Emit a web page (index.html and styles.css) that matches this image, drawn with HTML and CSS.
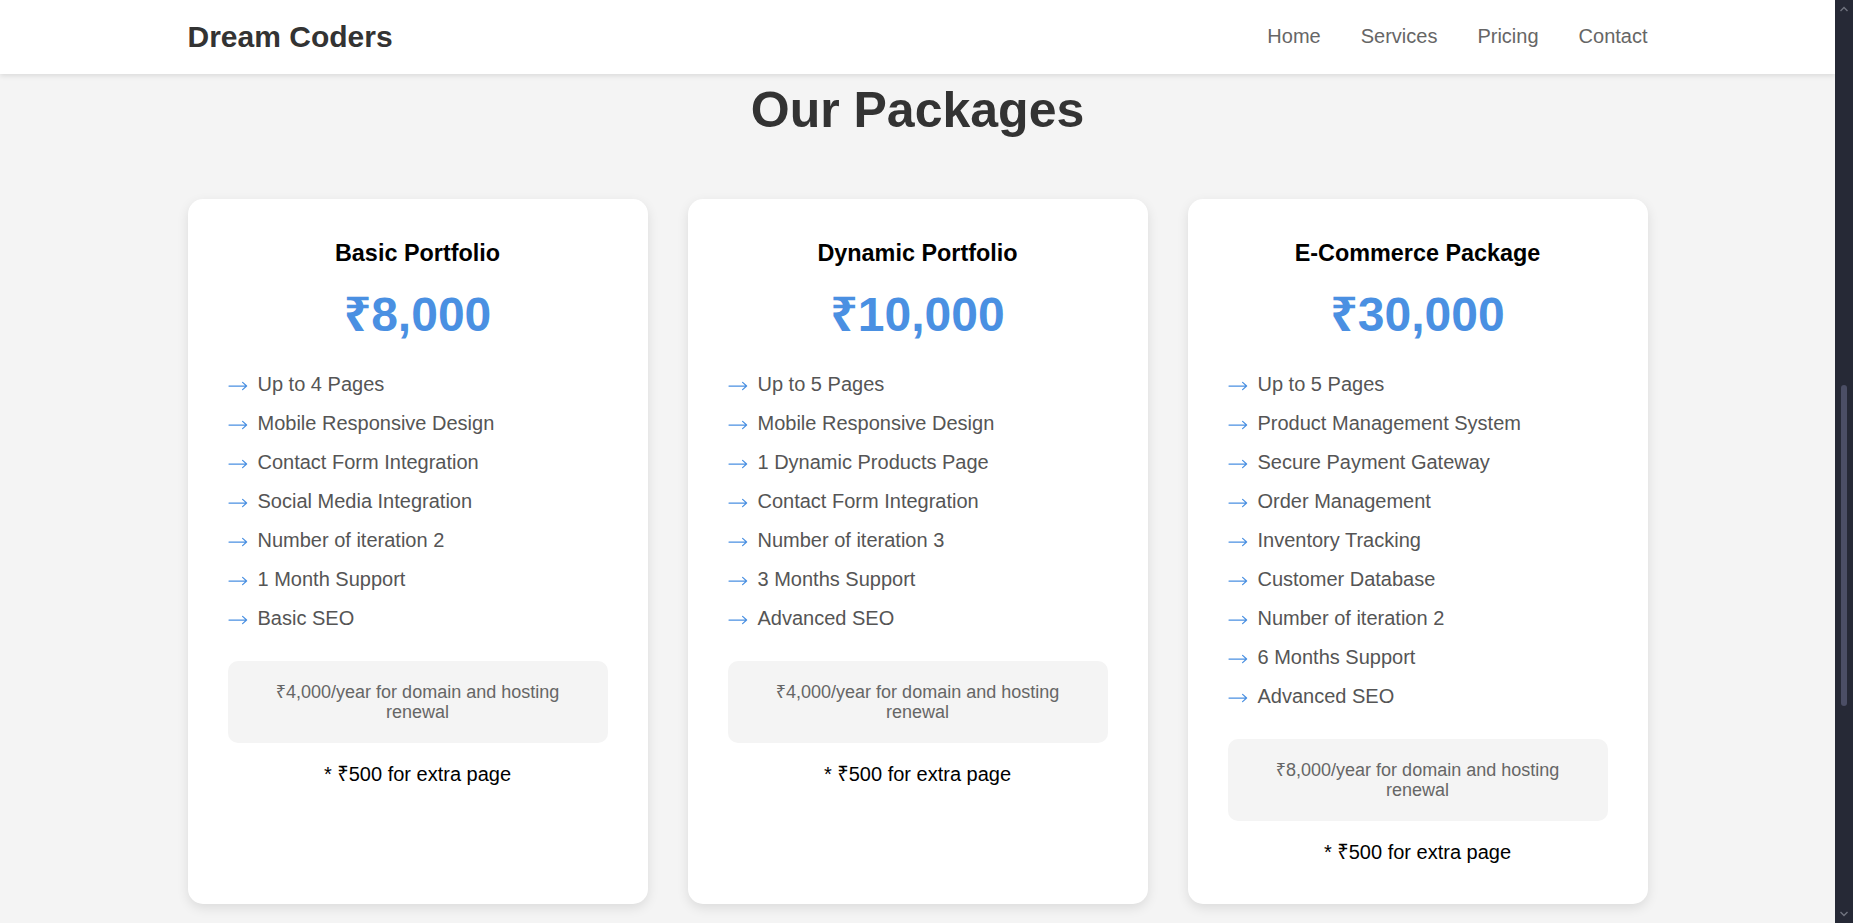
FILE: index.html
```html
<!DOCTYPE html>
<html lang="en">
<head>
<meta charset="UTF-8">
<title>Dream Coders</title>
<link rel="stylesheet" href="styles.css">
</head>
<body>
<svg class="defs" aria-hidden="true">
  <symbol id="arrow" viewBox="0 0 20 10">
    <path d="M1 5H18.6M14.6 1.4L18.6 5L14.6 8.6" fill="none" stroke="#4a90e2" stroke-width="1.25" stroke-linecap="round" stroke-linejoin="round"/>
  </symbol>
</svg>

<header class="site-header">
  <div class="container header-inner">
    <div class="logo">Dream Coders</div>
    <nav class="nav">
      <a href="#home">Home</a>
      <a href="#services">Services</a>
      <a href="#pricing">Pricing</a>
      <a href="#contact">Contact</a>
    </nav>
  </div>
</header>

<main>
  <section class="pricing" id="pricing">
    <div class="container">
      <h2 class="section-title">Our Packages</h2>
      <div class="cards">
        <div class="card">
          <h3 class="card-title">Basic Portfolio</h3>
          <div class="price">₹8,000</div>
          <ul class="features">
            <li><svg class="arrow"><use href="#arrow"/></svg>Up to 4 Pages</li>
            <li><svg class="arrow"><use href="#arrow"/></svg>Mobile Responsive Design</li>
            <li><svg class="arrow"><use href="#arrow"/></svg>Contact Form Integration</li>
            <li><svg class="arrow"><use href="#arrow"/></svg>Social Media Integration</li>
            <li><svg class="arrow"><use href="#arrow"/></svg>Number of iteration 2</li>
            <li><svg class="arrow"><use href="#arrow"/></svg>1 Month Support</li>
            <li><svg class="arrow"><use href="#arrow"/></svg>Basic SEO</li>
          </ul>
          <div class="note">₹4,000/year for domain and hosting renewal</div>
          <p class="extra">* ₹500 for extra page</p>
        </div>
        <div class="card">
          <h3 class="card-title">Dynamic Portfolio</h3>
          <div class="price">₹10,000</div>
          <ul class="features">
            <li><svg class="arrow"><use href="#arrow"/></svg>Up to 5 Pages</li>
            <li><svg class="arrow"><use href="#arrow"/></svg>Mobile Responsive Design</li>
            <li><svg class="arrow"><use href="#arrow"/></svg>1 Dynamic Products Page</li>
            <li><svg class="arrow"><use href="#arrow"/></svg>Contact Form Integration</li>
            <li><svg class="arrow"><use href="#arrow"/></svg>Number of iteration 3</li>
            <li><svg class="arrow"><use href="#arrow"/></svg>3 Months Support</li>
            <li><svg class="arrow"><use href="#arrow"/></svg>Advanced SEO</li>
          </ul>
          <div class="note">₹4,000/year for domain and hosting renewal</div>
          <p class="extra">* ₹500 for extra page</p>
        </div>
        <div class="card">
          <h3 class="card-title">E-Commerce Package</h3>
          <div class="price">₹30,000</div>
          <ul class="features">
            <li><svg class="arrow"><use href="#arrow"/></svg>Up to 5 Pages</li>
            <li><svg class="arrow"><use href="#arrow"/></svg>Product Management System</li>
            <li><svg class="arrow"><use href="#arrow"/></svg>Secure Payment Gateway</li>
            <li><svg class="arrow"><use href="#arrow"/></svg>Order Management</li>
            <li><svg class="arrow"><use href="#arrow"/></svg>Inventory Tracking</li>
            <li><svg class="arrow"><use href="#arrow"/></svg>Customer Database</li>
            <li><svg class="arrow"><use href="#arrow"/></svg>Number of iteration 2</li>
            <li><svg class="arrow"><use href="#arrow"/></svg>6 Months Support</li>
            <li><svg class="arrow"><use href="#arrow"/></svg>Advanced SEO</li>
          </ul>
          <div class="note">₹8,000/year for domain and hosting renewal</div>
          <p class="extra">* ₹500 for extra page</p>
        </div>
      </div>
    </div>
  </section>
</main>

<div class="scroll-rail" aria-hidden="true">
  <svg class="rail-btn rail-up" viewBox="0 0 10 6"><path d="M1.5 5L5 1.5L8.5 5" fill="none" stroke="#70737f" stroke-width="1.4"/></svg>
  <div class="rail-thumb"></div>
  <svg class="rail-btn rail-down" viewBox="0 0 10 6"><path d="M1.5 1L5 4.5L8.5 1" fill="none" stroke="#70737f" stroke-width="1.4"/></svg>
</div>
</body>
</html>
```

FILE: styles.css
```css
* {
  box-sizing: border-box;
}

body {
  margin: 0 18px 0 0;
  background: #f4f4f4;
  font-family: "Liberation Sans", Arial, "Noto Sans", "DejaVu Sans", sans-serif;
  line-height: 1.15;
  color: #333;
}

.defs {
  position: absolute;
  width: 0;
  height: 0;
  overflow: hidden;
}

.container {
  max-width: 1500px;
  margin: 0 auto;
  padding: 0 20px;
}

.site-header {
  position: relative;
  z-index: 2;
  background: #fff;
  box-shadow: 0 2px 5px rgba(0, 0, 0, 0.1);
}

.header-inner {
  display: flex;
  justify-content: space-between;
  align-items: center;
  padding-top: 19.5px;
  padding-bottom: 19.5px;
}

.logo {
  font-size: 30px;
  font-weight: bold;
  color: #333;
}

.nav {
  display: flex;
  gap: 40px;
}

.nav a {
  font-size: 20px;
  color: #666;
  text-decoration: none;
}

.pricing {
  padding: 8px 0 14px;
}

.section-title {
  margin: 0 0 60px;
  text-align: center;
  font-size: 50px;
  font-weight: bold;
  color: #333;
}

.cards {
  display: grid;
  grid-template-columns: repeat(3, 1fr);
  gap: 40px;
}

.card {
  background: #fff;
  border-radius: 15px;
  padding: 40px;
  box-shadow: 0 4px 12px rgba(0, 0, 0, 0.1);
  text-align: center;
}

.card-title {
  margin: 1px 0 20px;
  font-size: 23.4px;
  font-weight: bold;
  color: #000;
}

.price {
  margin: 0 0 23px;
  font-size: 48px;
  font-weight: bold;
  color: #4a90e2;
}

.features {
  list-style: none;
  margin: 0 0 23px;
  padding: 0;
  text-align: left;
}

.features li {
  padding: 8px 0;
  font-size: 20px;
  color: #555;
}

.arrow {
  width: 20px;
  height: 10px;
  margin-right: 10px;
  vertical-align: middle;
}

.note {
  background: #f4f4f4;
  border-radius: 10px;
  padding: 20.5px 20px;
  font-size: 18px;
  color: #666;
}

.extra {
  margin: 20px 0 0;
  font-size: 20px;
  color: #000;
}

.scroll-rail {
  position: fixed;
  top: 0;
  right: 0;
  bottom: 0;
  width: 18px;
  background: #262936;
}

.rail-btn {
  position: absolute;
  left: 4px;
  width: 10px;
  height: 6px;
}

.rail-up {
  top: 6px;
}

.rail-down {
  bottom: 6px;
}

.rail-thumb {
  position: absolute;
  top: 385px;
  left: 6px;
  width: 6px;
  height: 321px;
  border-radius: 3px;
  background: #4b4e65;
}
```
